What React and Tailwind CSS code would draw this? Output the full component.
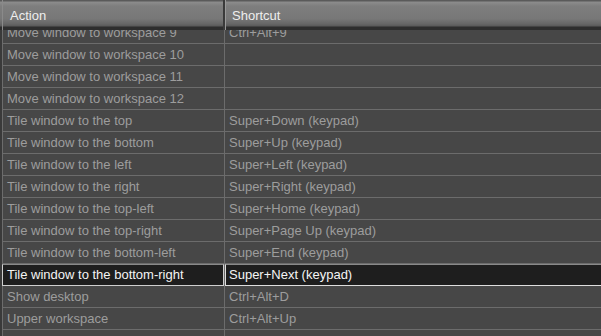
import React from "react";

const rows = [
  ["Move window to workspace 9", "Ctrl+Alt+9"],
  ["Move window to workspace 10", ""],
  ["Move window to workspace 11", ""],
  ["Move window to workspace 12", ""],
  ["Tile window to the top", "Super+Down (keypad)"],
  ["Tile window to the bottom", "Super+Up (keypad)"],
  ["Tile window to the left", "Super+Left (keypad)"],
  ["Tile window to the right", "Super+Right (keypad)"],
  ["Tile window to the top-left", "Super+Home (keypad)"],
  ["Tile window to the top-right", "Super+Page Up (keypad)"],
  ["Tile window to the bottom-left", "Super+End (keypad)"],
  ["Tile window to the bottom-right", "Super+Next (keypad)", true],
  ["Show desktop", "Ctrl+Alt+D"],
  ["Upper workspace", "Ctrl+Alt+Up"],
  ["Lower workspace", "Ctrl+Alt+Down"],
];

export default function App() {
  return (
    <div
      className="w-[601px] h-[336px] overflow-hidden bg-[#3a3a3a] flex flex-col text-[13px]"
      style={{ fontFamily: '"Liberation Sans", Arial, sans-serif' }}
    >
      <div className="relative z-10 flex h-[30px] shrink-0 bg-[linear-gradient(to_bottom,#5a5a5a_0px,#5a5a5a_1px,#8c8c8c_2px,#7e7e7e_6px,#777777_19px,#666666_24px,#5a5a5a_26px,#2e2e2e_27px,#2e2e2e_30px)]">
        <div className="w-[223px] ml-[2px] flex items-start pt-[6px] pl-[7px] text-[#eeeeee] border-l border-[#8a8a8a] border-r-2 border-r-[#3a3a3a]">
          Action
        </div>
        <div className="flex-1 flex items-start pt-[6px] pl-[6px] text-[#eeeeee] border-l border-[#9a9a9a]">
          Shortcut
        </div>
      </div>
      <div className="flex-1 overflow-hidden">
        <div className="mt-[-8px] flex flex-col">
          {rows.map(([a, s, sel], i) =>
            sel ? (
              <div key={i} className="flex h-[22px] bg-[#3a3a3a]">
                <div className="w-[222px] ml-[2px] flex items-center pl-[4px] bg-[#1e1e1e] text-[#f4f4f4] border border-[#cfcfcf] border-t-[#8a8a8a] whitespace-nowrap">
                  {a}
                </div>
                <div className="w-px bg-[#6a6a6a]" />
                <div className="flex-1 flex items-center pl-[3px] bg-[#1e1e1e] text-[#f4f4f4] border border-r-0 border-[#dedede] border-t-[#8a8a8a] whitespace-nowrap">
                  {s}
                </div>
              </div>
            ) : (
              <div key={i} className="flex h-[22px]">
                <div className="w-[222px] ml-[2px] flex items-center pl-[4px] bg-[#474747] text-[#9d9d9d] border-l border-b border-[#6c6c6c] whitespace-nowrap">
                  {a}
                </div>
                <div className="w-px bg-[#6c6c6c]" />
                <div className="flex-1 flex items-center pl-[4px] bg-[#474747] text-[#9d9d9d] border-b border-[#6c6c6c] whitespace-nowrap">
                  {s}
                </div>
              </div>
            )
          )}
        </div>
      </div>
    </div>
  );
}
